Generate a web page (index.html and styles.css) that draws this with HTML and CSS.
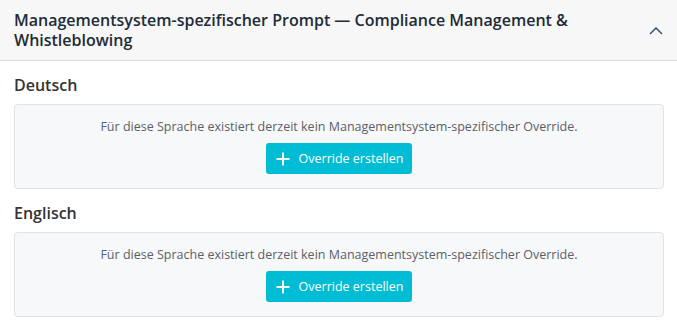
FILE: index.html
```html
<!DOCTYPE html>
<html lang="de">
<head>
<meta charset="utf-8">
<link rel="stylesheet" href="styles.css">
</head>
<body>
<div class="panel">
  <div class="panel-header">
    <h2 class="panel-title">Managementsystem-spezifischer Prompt — Compliance Management &amp; Whistleblowing</h2>
    <svg class="chevron" width="14" height="9" viewBox="0 0 14 9"><path d="M1 8 L7 2 L13 8" fill="none" stroke="#2d4060" stroke-width="1.3"/></svg>
  </div>
  <div class="panel-body">
    <section class="lang">
      <h3 class="lang-title">Deutsch</h3>
      <div class="empty-box">
        <p class="empty-text">Für diese Sprache existiert derzeit kein Managementsystem-spezifischer Override.</p>
        <button class="btn"><svg width="14" height="14" viewBox="0 0 14 14"><path d="M7 0.5 V13.5 M0.5 7 H13.5" stroke="#fff" stroke-width="2"/></svg><span>Override erstellen</span></button>
      </div>
    </section>
    <section class="lang">
      <h3 class="lang-title">Englisch</h3>
      <div class="empty-box">
        <p class="empty-text">Für diese Sprache existiert derzeit kein Managementsystem-spezifischer Override.</p>
        <button class="btn"><svg width="14" height="14" viewBox="0 0 14 14"><path d="M7 0.5 V13.5 M0.5 7 H13.5" stroke="#fff" stroke-width="2"/></svg><span>Override erstellen</span></button>
      </div>
    </section>
  </div>
</div>
</body>
</html>
```
FILE: styles.css
```css
* { box-sizing: border-box; }
html, body { margin: 0; padding: 0; background: #fff; }
body { font-family: "Open Sans", "Noto Sans", sans-serif; color: #333; }
.panel { width: 677px; }
.panel-header {
  background: #f7f7f7;
  border-bottom: 1px solid #dcdcdc;
  padding: 10px 14px 10px 14px;
  display: flex;
  align-items: center;
  justify-content: space-between;
  gap: 20px;
}
.panel-title {
  margin: 0;
  font-size: 16px;
  font-weight: 600;
  line-height: 20px;
  color: #222b36;
  flex: 1;
}
.chevron { flex: none; margin-right: 0; }
.panel-body { padding: 0 13px 0 14px; }
.lang-title {
  margin: 14px 0 9px;
  font-size: 16px;
  font-weight: 600;
  line-height: 20px;
  color: #333;
}
.empty-box {
  background: #f7f8fa;
  border: 1px solid #dfe2e6;
  border-radius: 4px;
  padding: 12px 16px 14px;
  display: flex;
  flex-direction: column;
  align-items: center;
}
.empty-text {
  margin: 0 0 6px;
  font-size: 12.5px;
  line-height: 20px;
  color: #5b5f66;
}
.btn {
  display: flex;
  align-items: center;
  gap: 9px;
  height: 31px;
  padding: 0 9px 0 10px;
  border: none;
  border-radius: 3px;
  background: #00bcd4;
  color: #fff;
  font-family: inherit;
  font-size: 12.5px;
}
```
